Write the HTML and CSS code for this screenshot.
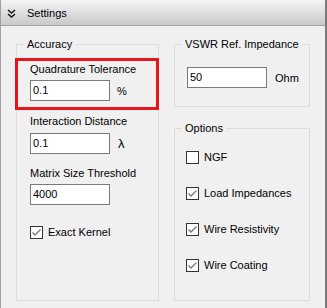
FILE: index.html
```html
<!DOCTYPE html>
<html>
<head>
<meta charset="utf-8">
<link rel="stylesheet" href="styles.css">
</head>
<body>
<div class="panel">
  <div class="header">
    <svg class="chev" width="9" height="9" viewBox="0 0 9 9"><polyline points="1,1 4.5,4 8,1" /><polyline points="1,5 4.5,8 8,5" /></svg>
    <span class="title">Settings</span>
  </div>
  <div class="body">
    <fieldset class="group accuracy">
      <legend>Accuracy</legend>
      <div class="highlight">
        <div class="label">Quadrature Tolerance</div>
        <div class="field"><span class="input">0.1</span><span class="unit">%</span></div>
      </div>
      <div class="fields">
        <div class="label l2">Interaction Distance</div>
        <div class="field"><span class="input">0.1</span><span class="unit lambda">λ</span></div>
        <div class="label l3">Matrix Size Threshold</div>
        <div class="field"><span class="input">4000</span></div>
        <div class="check exact"><span class="box"><svg width="11" height="11" viewBox="0 0 11 11"><polyline points="1.5,5.5 4,8 9.5,2.5"/></svg></span><span>Exact Kernel</span></div>
      </div>
    </fieldset>
    <div class="col">
      <fieldset class="group vswr">
        <legend>VSWR Ref. Impedance</legend>
        <div class="vswr-inner">
          <div class="field"><span class="input">50</span><span class="unit ohm">Ohm</span></div>
        </div>
      </fieldset>
      <fieldset class="group options">
        <legend>Options</legend>
        <div class="checks">
          <div class="check"><span class="box"></span><span>NGF</span></div>
          <div class="check"><span class="box"><svg width="11" height="11" viewBox="0 0 11 11"><polyline points="1.5,5.5 4,8 9.5,2.5"/></svg></span><span>Load Impedances</span></div>
          <div class="check"><span class="box"><svg width="11" height="11" viewBox="0 0 11 11"><polyline points="1.5,5.5 4,8 9.5,2.5"/></svg></span><span>Wire Resistivity</span></div>
          <div class="check"><span class="box"><svg width="11" height="11" viewBox="0 0 11 11"><polyline points="1.5,5.5 4,8 9.5,2.5"/></svg></span><span>Wire Coating</span></div>
        </div>
      </fieldset>
    </div>
  </div>
</div>
</body>
</html>
```

FILE: styles.css
```css
html, body {
  margin: 0;
  padding: 0;
  background: #f0f0f0;
}
body {
  font-family: "Liberation Sans", Arial, sans-serif;
  font-size: 11px;
  color: #000;
}
.panel {
  width: 327px;
  height: 308px;
  box-sizing: border-box;
  border-left: 1px solid #a0a0a0;
  border-right: 2px solid #7a7a7a;
  display: flex;
  flex-direction: column;
  background: #f0f0f0;
}
.header {
  height: 25px;
  border-bottom: 1px solid #a0a0a0;
  background: linear-gradient(#f4f4f4, #c9c9c9);
  display: flex;
  align-items: center;
  flex-shrink: 0;
}
.chev {
  margin-left: 6px;
  margin-top: 1px;
  fill: none;
  stroke: #1a1a1a;
  stroke-width: 1.6;
}
.title {
  margin-left: 11px;
  font-size: 11px;
}
.body {
  flex: 1;
  display: flex;
  gap: 15px;
  padding: 10px 15px 7px 15px;
}
.group {
  margin: 0;
  padding: 0;
  border: 1px solid #dcdcdc;
  min-width: 0;
  box-sizing: border-box;
}
.group legend {
  margin-left: 7px;
  padding: 0 3px;
  line-height: 16px;
  white-space: nowrap;
}
.accuracy {
  width: 143px;
}
.col {
  width: 136px;
  display: flex;
  flex-direction: column;
  gap: 13px;
}
.highlight {
  margin: 6px -1px 0 -2px;
  border: 3px solid #e8141c;
  padding: 0 0 6px 12px;
}
.label {
  line-height: 16px;
  margin-bottom: 3px;
}
.fields {
  padding-left: 13px;
}
.l2 {
  margin-top: 3px;
  margin-bottom: 4px;
}
.l3 {
  margin-top: 11px;
}
.field {
  display: flex;
  align-items: center;
}
.input {
  box-sizing: border-box;
  width: 80px;
  height: 21px;
  border: 1px solid #7a7a7a;
  background: #fff;
  padding-left: 2px;
  line-height: 19px;
}
.unit {
  margin-left: 7px;
}
.lambda {
  font-size: 13px;
  margin-left: 8px;
}
.check {
  display: flex;
  align-items: center;
  height: 13px;
  line-height: 13px;
}
.exact {
  margin-top: 21px;
}
.box {
  box-sizing: border-box;
  width: 13px;
  height: 13px;
  border: 1px solid #333;
  background: #fff;
  margin-right: 5px;
  display: flex;
}
.box svg {
  fill: none;
  stroke: #777;
  stroke-width: 1.3;
}
.vswr-inner {
  padding: 15px 0 18px 12px;
}
.ohm {
  margin-left: 8px;
}
.options {
  flex: 1;
}
.checks {
  padding: 15px 0 0 11px;
  display: flex;
  flex-direction: column;
  gap: 23px;
}
```
